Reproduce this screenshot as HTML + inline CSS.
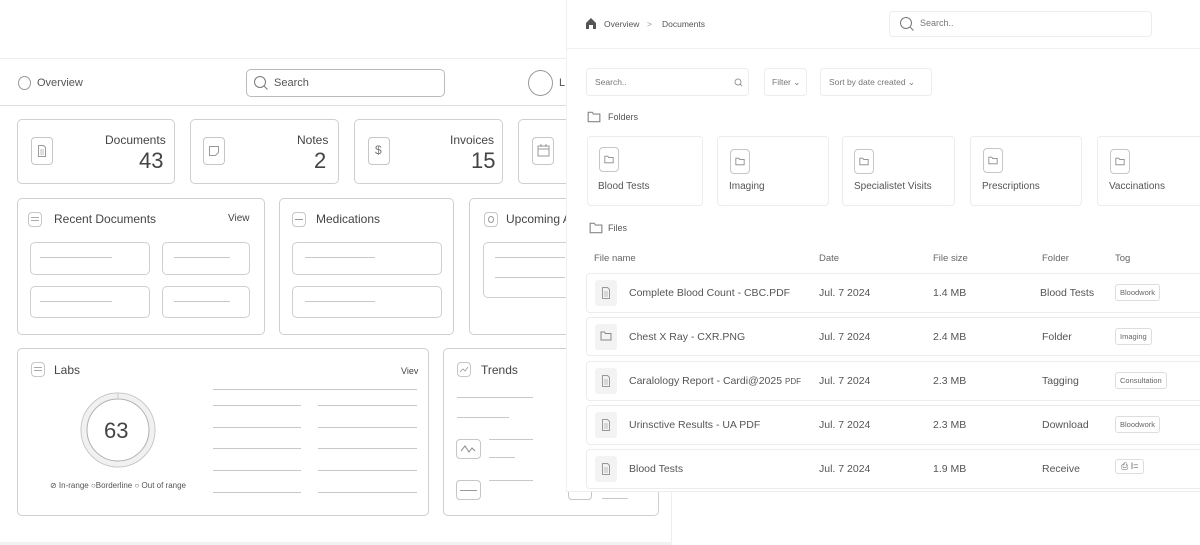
<!DOCTYPE html>
<html><head><meta charset="utf-8"><style>
*{box-sizing:border-box;margin:0;padding:0}
body{width:1200px;height:545px;overflow:hidden;background:#fff;font-family:"Liberation Sans",sans-serif;color:#444;position:relative}
.a{position:absolute}
.bx{position:absolute;border:1px solid #cfcfcf;border-radius:5px;background:#fff}
.ln{position:absolute;height:1px;background:#c8c8c8}
.t{position:absolute;white-space:nowrap}
.ib{position:absolute;border:1px solid #c6c6c6;border-radius:4px}
.rb{position:absolute;border:1px solid #ececec;border-radius:4px;background:#fff}
.fi{position:absolute;width:22px;height:26px;background:#f3f3f3;border-radius:3px}
.tag{position:absolute;border:1px solid #ddd;border-radius:3px;font-size:7.5px;color:#666;padding:3px 4px}
</style></head><body>
<svg width="0" height="0" style="position:absolute"><defs>
<symbol id="doc" viewBox="0 0 10 14"><path d="M1.5 1.5h5l2 2v9h-7z" fill="none" stroke="#999"/><path d="M3 6h4M3 8h4M3 10h4" stroke="#aaa" stroke-width=".8"/></symbol>
<symbol id="fold" viewBox="0 0 12 10"><path d="M1 1h3.5l1 1.5H11V9H1z" fill="none" stroke="#888"/></symbol>
</defs></svg>
<!-- left panel -->
<div class="a" style="left:0;top:58px;width:672px;height:487px;border-top:1px solid #eee;border-right:1px solid #eee;background:#fff"></div>
<div class="a" style="left:0;top:542px;width:672px;height:3px;background:#f2f2f2"></div>
<div class="a" style="left:18px;top:76px;width:13px;height:14px;border:1px solid #999;border-radius:50%"></div>
<div class="t" style="left:37px;top:77px;font-size:11px;color:#555">Overview</div>
<div class="bx" style="left:246px;top:69px;width:199px;height:28px;border-color:#bbb"></div>
<svg class="a" style="left:253px;top:75px" width="16" height="16"><circle cx="7" cy="7" r="5.5" fill="none" stroke="#777"/><path d="M11 11l3.5 3.5" stroke="#777"/></svg>
<div class="t" style="left:274px;top:77px;font-size:11px;color:#555">Search</div>
<div class="a" style="left:528px;top:70px;width:25px;height:26px;border:1px solid #999;border-radius:50%"></div>
<div class="t" style="left:559px;top:77px;font-size:11px;color:#555">L</div>
<div class="ln" style="left:0;top:105px;width:566px;background:#ddd"></div>

<div class="bx" style="left:17px;top:119px;width:158px;height:65px"></div>
<div class="bx" style="left:190px;top:119px;width:149px;height:65px"></div>
<div class="bx" style="left:354px;top:119px;width:149px;height:65px"></div>
<div class="bx" style="left:518px;top:119px;width:60px;height:65px"></div>
<div class="ib" style="left:31px;top:137px;width:22px;height:28px"></div>
<div class="ib" style="left:203px;top:137px;width:22px;height:28px"></div>
<div class="ib" style="left:368px;top:137px;width:22px;height:28px"></div>
<div class="ib" style="left:532px;top:137px;width:22px;height:28px"></div>
<svg class="a" style="left:37px;top:144px" width="10" height="14"><use href="#doc"/></svg>
<svg class="a" style="left:208px;top:145px" width="12" height="12"><path d="M1.5 1.5h9v6l-3 3h-6z" fill="none" stroke="#999"/></svg>
<div class="t" style="left:375px;top:143px;font-size:12px;color:#777">$</div>
<svg class="a" style="left:537px;top:144px" width="13" height="13"><rect x="1" y="2" width="11" height="10" fill="none" stroke="#999"/><path d="M1 5h11M4 0v3M9 0v3" stroke="#999"/></svg>
<div class="t" style="left:105px;top:133px;font-size:12px">Documents</div>
<div class="t" style="left:139px;top:148px;font-size:22px">43</div>
<div class="t" style="left:297px;top:133px;font-size:12px">Notes</div>
<div class="t" style="left:314px;top:148px;font-size:22px">2</div>
<div class="t" style="left:450px;top:133px;font-size:12px">Invoices</div>
<div class="t" style="left:471px;top:148px;font-size:22px">15</div>

<div class="bx" style="left:17px;top:198px;width:248px;height:137px"></div>
<div class="bx" style="left:279px;top:198px;width:175px;height:137px"></div>
<div class="bx" style="left:469px;top:198px;width:110px;height:137px"></div>
<div class="ib" style="left:28px;top:212px;width:14px;height:15px"></div>
<div class="ln" style="left:31px;top:217px;width:8px;background:#aaa"></div><div class="ln" style="left:31px;top:220px;width:8px;background:#aaa"></div>
<div class="ib" style="left:292px;top:212px;width:14px;height:15px"></div>
<div class="ln" style="left:295px;top:219px;width:8px;background:#999"></div>
<div class="ib" style="left:484px;top:212px;width:14px;height:15px"></div>
<div class="a" style="left:488px;top:216px;width:6px;height:7px;border:1px solid #999;border-radius:50%"></div>
<div class="t" style="left:54px;top:212px;font-size:12px">Recent Documents</div>
<div class="t" style="left:228px;top:213px;font-size:10px">View</div>
<div class="t" style="left:316px;top:212px;font-size:12px">Medications</div>
<div class="t" style="left:506px;top:212px;font-size:12px">Upcoming Ap</div>
<div class="bx" style="left:30px;top:242px;width:120px;height:33px"></div>
<div class="bx" style="left:162px;top:242px;width:88px;height:33px"></div>
<div class="bx" style="left:30px;top:286px;width:120px;height:32px"></div>
<div class="bx" style="left:162px;top:286px;width:88px;height:32px"></div>
<div class="bx" style="left:292px;top:242px;width:150px;height:33px"></div>
<div class="bx" style="left:292px;top:286px;width:150px;height:32px"></div>
<div class="bx" style="left:483px;top:242px;width:100px;height:56px"></div>
<div class="ln" style="left:40px;top:257px;width:72px"></div><div class="ln" style="left:174px;top:257px;width:56px"></div>
<div class="ln" style="left:40px;top:301px;width:72px"></div><div class="ln" style="left:174px;top:301px;width:56px"></div>
<div class="ln" style="left:305px;top:257px;width:70px"></div><div class="ln" style="left:305px;top:301px;width:70px"></div>
<div class="ln" style="left:495px;top:257px;width:70px"></div><div class="ln" style="left:495px;top:277px;width:70px"></div>

<div class="bx" style="left:17px;top:348px;width:412px;height:168px"></div>
<div class="ib" style="left:31px;top:362px;width:14px;height:15px"></div>
<div class="ln" style="left:34px;top:367px;width:8px;background:#aaa"></div><div class="ln" style="left:34px;top:370px;width:8px;background:#aaa"></div>
<div class="t" style="left:54px;top:363px;font-size:12px">Labs</div>
<div class="t" style="left:401px;top:366px;font-size:9px">Viev</div>
<svg class="a" style="left:78px;top:390px" width="80" height="80"><circle cx="40" cy="40" r="37" fill="none" stroke="#c4c4c4"/><circle cx="40" cy="40" r="34" fill="none" stroke="#f1f1f1" stroke-width="5"/><circle cx="40" cy="40" r="31" fill="none" stroke="#b0b0b0"/><path d="M40 3v6" stroke="#ccc"/></svg>
<div class="t" style="left:104px;top:418px;font-size:22px;color:#444">63</div>
<div class="t" style="left:50px;top:481px;font-size:8px;color:#555">⊘ In-range ○Borderline ○ Out of range</div>
<div class="ln" style="left:213px;top:389px;width:204px"></div>
<div class="ln" style="left:213px;top:405px;width:88px"></div><div class="ln" style="left:318px;top:405px;width:99px"></div>
<div class="ln" style="left:213px;top:427px;width:88px"></div><div class="ln" style="left:318px;top:427px;width:99px"></div>
<div class="ln" style="left:213px;top:448px;width:88px"></div><div class="ln" style="left:318px;top:448px;width:99px"></div>
<div class="ln" style="left:213px;top:470px;width:88px"></div><div class="ln" style="left:318px;top:470px;width:99px"></div>
<div class="ln" style="left:213px;top:492px;width:88px"></div><div class="ln" style="left:318px;top:492px;width:99px"></div>

<div class="bx" style="left:443px;top:348px;width:216px;height:168px"></div>
<div class="ib" style="left:457px;top:362px;width:14px;height:15px"></div>
<svg class="a" style="left:459px;top:365px" width="10" height="9"><path d="M1 7l3-3 2 2 3-4" fill="none" stroke="#999" stroke-width=".8"/></svg>
<div class="t" style="left:481px;top:363px;font-size:12px">Trends</div>
<div class="ln" style="left:457px;top:397px;width:76px"></div>
<div class="ln" style="left:457px;top:417px;width:52px"></div>
<div class="ib" style="left:456px;top:439px;width:25px;height:20px"></div>
<svg class="a" style="left:459px;top:442px" width="20" height="14"><path d="M2 9l4-5 4 6 3-4 3 3" fill="none" stroke="#888"/></svg>
<div class="ln" style="left:489px;top:439px;width:44px"></div><div class="ln" style="left:489px;top:457px;width:26px"></div>
<div class="ib" style="left:456px;top:480px;width:25px;height:20px"></div><div class="ln" style="left:460px;top:490px;width:17px;background:#999"></div>
<div class="ln" style="left:489px;top:480px;width:44px"></div>
<div class="ib" style="left:568px;top:485px;width:24px;height:15px"></div><div class="ln" style="left:602px;top:498px;width:26px"></div>

<!-- right panel -->
<div class="a" style="left:566px;top:0;width:634px;height:492px;background:#fff;border-left:1px solid #f0f0f0;border-bottom:1px solid #eee"></div>
<svg class="a" style="left:585px;top:17px" width="12" height="13"><path d="M1 6L6 1l5 5v6H1z" fill="#555"/><rect x="4" y="8" width="4" height="4" fill="#fff"/></svg>
<div class="t" style="left:604px;top:19px;font-size:8.5px;color:#555">Overview</div>
<div class="t" style="left:647px;top:19px;font-size:8.5px;color:#999">&gt;</div>
<div class="t" style="left:662px;top:19px;font-size:8.5px;color:#555">Documents</div>
<div class="rb" style="left:889px;top:11px;width:263px;height:26px"></div>
<svg class="a" style="left:899px;top:16px" width="16" height="16"><circle cx="7" cy="7" r="5.5" fill="none" stroke="#777"/><path d="M11 11l3.5 3.5" stroke="#777"/></svg>
<div class="t" style="left:920px;top:18px;font-size:9px;color:#777">Search..</div>
<div class="ln" style="left:566px;top:48px;width:634px;background:#f0f0f0"></div>

<div class="rb" style="left:586px;top:68px;width:163px;height:28px"></div>
<div class="t" style="left:595px;top:77px;font-size:8.5px;color:#777">Search..</div>
<svg class="a" style="left:734px;top:78px" width="9" height="9"><circle cx="4" cy="4" r="3" fill="none" stroke="#999"/><path d="M6 6l2 2" stroke="#999"/></svg>
<div class="rb" style="left:764px;top:68px;width:43px;height:28px"></div>
<div class="t" style="left:772px;top:77px;font-size:8.5px;color:#777">Filter ⌄</div>
<div class="rb" style="left:820px;top:68px;width:112px;height:28px"></div>
<div class="t" style="left:829px;top:77px;font-size:8.5px;color:#777">Sort by date created ⌄</div>

<svg class="a" style="left:587px;top:111px" width="14" height="12"><use href="#fold"/></svg>
<div class="t" style="left:608px;top:112px;font-size:9px;color:#555">Folders</div>
<div class="rb" style="left:587px;top:136px;width:116px;height:70px"></div>
<div class="rb" style="left:717px;top:136px;width:112px;height:70px"></div>
<div class="rb" style="left:842px;top:136px;width:113px;height:70px"></div>
<div class="rb" style="left:970px;top:136px;width:112px;height:70px"></div>
<div class="rb" style="left:1097px;top:136px;width:110px;height:70px"></div>
<div class="ib" style="left:599px;top:147px;width:20px;height:25px"></div>
<div class="ib" style="left:730px;top:149px;width:20px;height:25px"></div>
<div class="ib" style="left:854px;top:149px;width:20px;height:25px"></div>
<div class="ib" style="left:983px;top:148px;width:20px;height:25px"></div>
<div class="ib" style="left:1110px;top:149px;width:20px;height:25px"></div>
<svg class="a" style="left:604px;top:155px" width="10" height="9"><use href="#fold"/></svg>
<svg class="a" style="left:735px;top:157px" width="10" height="9"><use href="#fold"/></svg>
<svg class="a" style="left:859px;top:157px" width="10" height="9"><use href="#fold"/></svg>
<svg class="a" style="left:988px;top:156px" width="10" height="9"><use href="#fold"/></svg>
<svg class="a" style="left:1115px;top:157px" width="10" height="9"><use href="#fold"/></svg>
<div class="t" style="left:598px;top:181px;font-size:10px;color:#555">Blood Tests</div>
<div class="t" style="left:729px;top:181px;font-size:10px;color:#555">Imaging</div>
<div class="t" style="left:854px;top:181px;font-size:10px;color:#555">Specialistet Visits</div>
<div class="t" style="left:982px;top:181px;font-size:10px;color:#555">Prescriptions</div>
<div class="t" style="left:1109px;top:181px;font-size:10px;color:#555">Vaccinations</div>

<svg class="a" style="left:589px;top:222px" width="14" height="12"><use href="#fold"/></svg>
<div class="t" style="left:608px;top:223px;font-size:9px;color:#555">Files</div>
<div class="t" style="left:594px;top:253px;font-size:9.5px;color:#666">File name</div>
<div class="t" style="left:819px;top:253px;font-size:9.5px;color:#666">Date</div>
<div class="t" style="left:933px;top:253px;font-size:9.5px;color:#666">File size</div>
<div class="t" style="left:1042px;top:253px;font-size:9.5px;color:#666">Folder</div>
<div class="t" style="left:1115px;top:253px;font-size:9.5px;color:#666">Tog</div>

<div class="rb" style="left:586px;top:273px;width:620px;height:40px"></div>
<div class="rb" style="left:586px;top:317px;width:620px;height:39px"></div>
<div class="rb" style="left:586px;top:361px;width:620px;height:40px"></div>
<div class="rb" style="left:586px;top:405px;width:620px;height:40px"></div>
<div class="rb" style="left:586px;top:449px;width:620px;height:40px"></div>
<div class="fi" style="left:595px;top:280px"></div><div class="fi" style="left:595px;top:324px"></div><div class="fi" style="left:595px;top:368px"></div><div class="fi" style="left:595px;top:412px"></div><div class="fi" style="left:595px;top:456px"></div>
<svg class="a" style="left:601px;top:286px" width="10" height="14"><use href="#doc"/></svg>
<svg class="a" style="left:600px;top:331px" width="12" height="10"><use href="#fold"/></svg>
<svg class="a" style="left:601px;top:374px" width="10" height="14"><use href="#doc"/></svg>
<svg class="a" style="left:601px;top:418px" width="10" height="14"><use href="#doc"/></svg>
<svg class="a" style="left:601px;top:462px" width="10" height="14"><use href="#doc"/></svg>
<div class="t" style="left:629px;top:287px;font-size:10.5px;color:#555">Complete Blood Count - CBC.PDF</div>
<div class="t" style="left:629px;top:331px;font-size:10.5px;color:#555">Chest X Ray - CXR.PNG</div>
<div class="t" style="left:629px;top:375px;font-size:10.5px;color:#555">Caralology Report - Cardi@2025 <span style="font-size:8px">PDF</span></div>
<div class="t" style="left:629px;top:419px;font-size:10.5px;color:#555">Urinsctive Results - UA PDF</div>
<div class="t" style="left:629px;top:463px;font-size:10.5px;color:#555">Blood Tests</div>
<div class="t" style="left:819px;top:287px;font-size:10.5px;color:#555">Jul. 7 2024</div>
<div class="t" style="left:819px;top:331px;font-size:10.5px;color:#555">Jul. 7 2024</div>
<div class="t" style="left:819px;top:375px;font-size:10.5px;color:#555">Jul. 7 2024</div>
<div class="t" style="left:819px;top:419px;font-size:10.5px;color:#555">Jul. 7 2024</div>
<div class="t" style="left:819px;top:463px;font-size:10.5px;color:#555">Jul. 7 2024</div>
<div class="t" style="left:933px;top:287px;font-size:10.5px;color:#555">1.4 MB</div>
<div class="t" style="left:933px;top:331px;font-size:10.5px;color:#555">2.4 MB</div>
<div class="t" style="left:933px;top:375px;font-size:10.5px;color:#555">2.3 MB</div>
<div class="t" style="left:933px;top:419px;font-size:10.5px;color:#555">2.3 MB</div>
<div class="t" style="left:933px;top:463px;font-size:10.5px;color:#555">1.9 MB</div>
<div class="t" style="left:1040px;top:287px;font-size:10.5px;color:#555">Blood Tests</div>
<div class="t" style="left:1042px;top:331px;font-size:10.5px;color:#555">Folder</div>
<div class="t" style="left:1042px;top:375px;font-size:10.5px;color:#555">Tagging</div>
<div class="t" style="left:1042px;top:419px;font-size:10.5px;color:#555">Download</div>
<div class="t" style="left:1042px;top:463px;font-size:10.5px;color:#555">Receive</div>
<div class="tag" style="left:1115px;top:284px">Bloodwork</div>
<div class="tag" style="left:1115px;top:328px">Imaging</div>
<div class="tag" style="left:1115px;top:372px">Consultation</div>
<div class="tag" style="left:1115px;top:416px">Bloodwork</div>
<div class="tag" style="left:1115px;top:459px;font-size:9px;padding:1px 5px">⎙ I=</div>
</body></html>
